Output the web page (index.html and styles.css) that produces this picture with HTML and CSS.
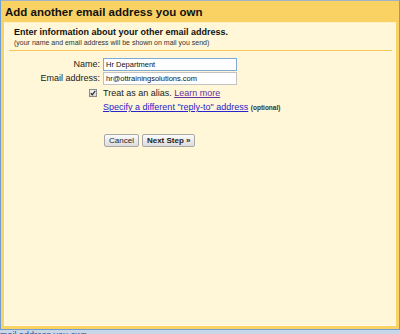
FILE: index.html
```html
<!DOCTYPE html>
<html>
<head>
<meta charset="utf-8">
<link rel="stylesheet" href="styles.css">
</head>
<body>
<div class="frame">
  <div class="titlebar">Add another email address you own</div>
  <div class="shell">
    <div class="panel">
      <div class="intro">
        <div class="heading">Enter information about your other email address.</div>
        <div class="sub">(your name and email address will be shown on mail you send)</div>
      </div>
      <div class="rule"></div>
      <div class="form">
        <label class="label">Name:</label>
        <div class="field focus">Hr Department</div>
        <label class="label">Email address:</label>
        <div class="field">hr@ottrainingsolutions.com</div>
        <span class="check"><svg width="6" height="6" viewBox="0 0 6 6"><path d="M0.8 3.2 L2.3 4.8 L5.3 0.9" fill="none" stroke="#333" stroke-width="1.3"/></svg></span>
        <div class="text">Treat as an alias. <a class="visited" href="#">Learn more</a></div>
        <span></span>
        <div class="text"><a class="link" href="#">Specify a different "reply-to" address</a> <span class="opt">(optional)</span></div>
        <span></span>
        <div class="buttons">
          <button class="btn">Cancel</button>
          <button class="btn strong">Next Step »</button>
        </div>
      </div>
    </div>
  </div>
</div>
<div class="below"><span>mail address you own</span></div>
</body>
</html>
```

FILE: styles.css
```css
html, body {
  margin: 0;
  padding: 0;
}
body {
  width: 400px;
  height: 334px;
  overflow: hidden;
  background: #c9d6e6;
  font-family: "Liberation Sans", Arial, sans-serif;
  color: #222;
}
.frame {
  box-sizing: border-box;
  height: 330px;
  border: 1px solid #6d9fd6;
  border-top-color: #9fb2c8;
  display: flex;
  flex-direction: column;
}
.titlebar {
  height: 21px;
  line-height: 22px;
  background: #fad163;
  font-weight: bold;
  font-size: 11.5px;
  padding-left: 4px;
  color: #111;
}
.shell {
  flex: 1;
  background: #fad163;
  padding: 0 3px 3px 3px;
  display: flex;
}
.panel {
  flex: 1;
  background: #fff7d7;
  border: 1px solid #fffbea;
  border-top-color: #fff1c4;
}
.intro {
  padding: 4px 0 0 9px;
}
.heading {
  font-weight: bold;
  font-size: 9px;
  line-height: 11px;
  color: #111;
}
.sub {
  font-size: 7px;
  line-height: 9px;
  color: #333;
}
.rule {
  height: 1px;
  background: #f7c95a;
  margin: 3px 3px 0 4px;
}
.form {
  display: grid;
  grid-template-columns: 95px 1fr;
  column-gap: 3px;
  row-gap: 1px;
  margin-top: 7px;
  align-items: center;
}
.label {
  justify-self: end;
  font-size: 9px;
  line-height: 13px;
  color: #222;
}
.field {
  box-sizing: border-box;
  width: 134px;
  height: 13px;
  border: 1px solid #c3c3c3;
  background: #fff;
  font-size: 7.5px;
  line-height: 11px;
  padding-left: 2px;
  color: #111;
}
.field.focus {
  border-color: #82a8d6;
}
.check {
  justify-self: end;
  margin-right: 3px;
  box-sizing: border-box;
  width: 8px;
  height: 8px;
  border: 1px solid #8a8a8a;
  background: linear-gradient(#f4f4f4, #d8d8d8);
  display: flex;
  align-items: center;
  justify-content: center;
  margin-top: 1px;
}
.check svg {
  display: block;
}
.text {
  font-size: 9px;
  line-height: 12px;
  margin-top: 1px;
}
a {
  text-decoration: underline;
}
.visited {
  color: #6a2ea0;
}
.link {
  color: #2a22cc;
}
.opt {
  font-size: 6.5px;
  font-weight: bold;
  color: #333;
}
.buttons {
  display: flex;
  gap: 3px;
  margin-top: 19px;
  margin-left: 1px;
}
.btn {
  box-sizing: border-box;
  height: 13px;
  padding: 0 4px;
  font-family: "Liberation Sans", Arial, sans-serif;
  font-size: 8px;
  line-height: 11px;
  color: #222;
  border: 1px solid #a8a8a8;
  border-radius: 2px;
  background: linear-gradient(#fbfbfb, #dcdcdc);
}
.btn.strong {
  font-weight: bold;
}
.below {
  height: 4px;
  overflow: hidden;
  margin-top: 1px;
  font-size: 9px;
  line-height: 9px;
  color: #2b4f9a;
  padding-left: 0;
}
```
